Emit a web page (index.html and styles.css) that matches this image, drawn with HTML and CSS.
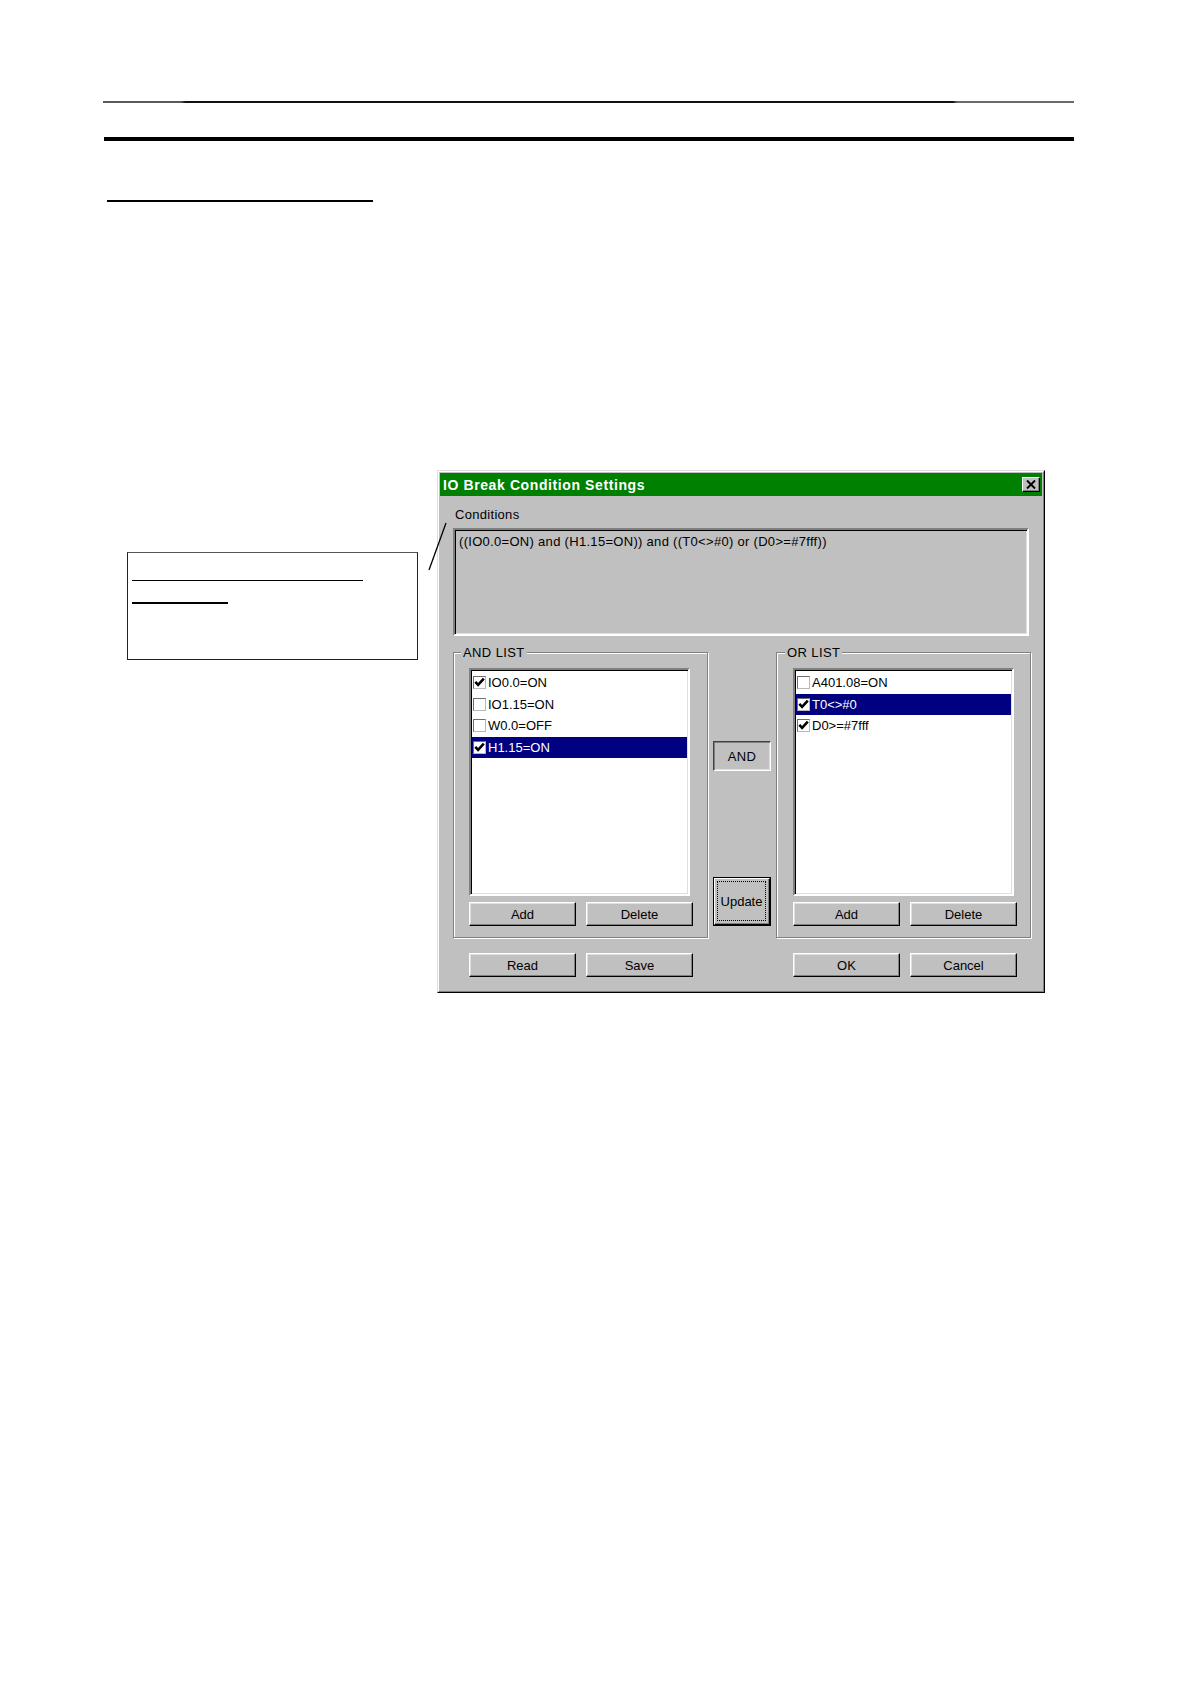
FILE: index.html
```html
<!DOCTYPE html>
<html lang="en">
<head>
<meta charset="utf-8">
<title>IO Break Condition Settings</title>
<link rel="stylesheet" href="styles.css">
</head>
<body>
<div class="page">
  <div class="rule-thin"></div>
  <div class="rule-thick"></div>
  <div class="heading-rule"></div>

  <div class="figure">
    <div class="callout">
      <div class="callout-line1"></div>
      <div class="callout-line2"></div>
    </div>
    <svg class="leader" width="22" height="54" viewBox="0 0 22 54"><line x1="2" y1="50" x2="19" y2="3" stroke="#000" stroke-width="1.3"/></svg>

    <div class="dialog">
      <div class="dialog-in">
        <div class="titlebar">
          <span class="title">IO Break Condition Settings</span>
          <span class="close"><svg width="10" height="9" viewBox="0 0 10 9"><path d="M1 0.5 L9 8.5 M9 0.5 L1 8.5" stroke="#000" stroke-width="2"/></svg></span>
        </div>
        <div class="dlg-body">
          <div class="cond-label">Conditions</div>
          <div class="cond-box">((IO0.0=ON) and (H1.15=ON)) and ((T0&lt;&gt;#0) or (D0&gt;=#7fff))</div>

          <div class="lists">
            <div class="group">
              <div class="group-title">AND LIST</div>
              <div class="listbox">
                <div class="row"><span class="cb"><svg class="tick" width="11" height="11" viewBox="0 0 11 11"><path d="M1.3 4.8 L4.1 7.9 L9.8 1.6" fill="none" stroke="#000" stroke-width="2.6"/></svg></span>IO0.0=ON</div>
                <div class="row"><span class="cb"></span>IO1.15=ON</div>
                <div class="row"><span class="cb"></span>W0.0=OFF</div>
                <div class="row sel"><span class="cb"><svg class="tick" width="11" height="11" viewBox="0 0 11 11"><path d="M1.3 4.8 L4.1 7.9 L9.8 1.6" fill="none" stroke="#000" stroke-width="2.6"/></svg></span>H1.15=ON</div>
              </div>
              <div class="btn-row">
                <button class="btn">Add</button>
                <button class="btn">Delete</button>
              </div>
            </div>

            <div class="mid">
              <button class="btn btn-and">AND</button>
              <button class="btn-default"><span class="face"><span class="focus">Update</span></span></button>
            </div>

            <div class="group group-or">
              <div class="group-title">OR LIST</div>
              <div class="listbox">
                <div class="row"><span class="cb"></span>A401.08=ON</div>
                <div class="row sel"><span class="cb"><svg class="tick" width="11" height="11" viewBox="0 0 11 11"><path d="M1.3 4.8 L4.1 7.9 L9.8 1.6" fill="none" stroke="#000" stroke-width="2.6"/></svg></span>T0&lt;&gt;#0</div>
                <div class="row"><span class="cb"><svg class="tick" width="11" height="11" viewBox="0 0 11 11"><path d="M1.3 4.8 L4.1 7.9 L9.8 1.6" fill="none" stroke="#000" stroke-width="2.6"/></svg></span>D0&gt;=#7fff</div>
              </div>
              <div class="btn-row">
                <button class="btn">Add</button>
                <button class="btn">Delete</button>
              </div>
            </div>
          </div>

          <div class="footer">
            <div class="pair">
              <button class="btn">Read</button>
              <button class="btn">Save</button>
            </div>
            <div class="pair pair-right">
              <button class="btn">OK</button>
              <button class="btn">Cancel</button>
            </div>
          </div>
        </div>
      </div>
    </div>
  </div>
</div>
</body>
</html>
```

FILE: styles.css
```css
* { box-sizing: border-box; }

html, body {
  margin: 0;
  background: #ffffff;
}

body {
  font-family: "Liberation Sans", Arial, sans-serif;
  color: #000;
}

.page {
  width: 1190px;
  min-height: 1684px;
  padding-top: 101px;
}

.rule-thin {
  height: 2px;
  width: 971px;
  margin-left: 103px;
  background: linear-gradient(to right, #5a5a5a 0, #5a5a5a 8%, #111 8.5%, #111 87.5%, #6a6a6a 88%, #6a6a6a 100%);
}

.rule-thick {
  height: 4px;
  width: 970px;
  margin: 34px 0 0 104px;
  background: #000;
}

.heading-rule {
  height: 2px;
  width: 266px;
  margin: 59px 0 0 107px;
  background: #000;
}

.figure {
  position: relative;
  display: flex;
  align-items: flex-start;
  margin: 268px 0 0 127px;
}

.callout {
  width: 291px;
  height: 108px;
  margin-top: 82px;
  border: 1px solid #222;
  border-top-color: #555;
  padding: 27px 0 0 4px;
}

.callout-line1 {
  width: 231px;
  height: 1px;
  background: #000;
}

.callout-line2 {
  width: 96px;
  height: 2px;
  margin-top: 21px;
  background: #000;
}

.leader {
  position: absolute;
  left: 300px;
  top: 50px;
}

/* ---------- dialog ---------- */
.dialog {
  margin-left: 19px;
  width: 608px;
  height: 523px;
  background: #c0c0c0;
  border: 1px solid;
  border-color: #dfdfdf #000 #000 #dfdfdf;
  font-size: 13px;
}

.dialog-in {
  height: 100%;
  border: 1px solid;
  border-color: #fff #808080 #808080 #fff;
  padding: 1px;
  display: flex;
  flex-direction: column;
}

.titlebar {
  height: 23px;
  flex: none;
  background: #008000;
  display: flex;
  align-items: center;
  padding-left: 3px;
  color: #fff;
}

.title {
  font-weight: bold;
  font-size: 14px;
  letter-spacing: 0.6px;
}

.close {
  margin-left: auto;
  margin-right: 2px;
  width: 18px;
  height: 15px;
  background: #c0c0c0;
  border: 1px solid;
  border-color: #fff #000 #000 #fff;
  box-shadow: inset -1px -1px 0 #808080;
  display: flex;
  align-items: center;
  justify-content: center;
}

.dlg-body {
  display: flex;
  flex-direction: column;
  padding: 11px 8px 0 13px;
}

.cond-label {
  line-height: 15px;
  height: 15px;
  padding-left: 2px;
  letter-spacing: 0.3px;
}

.cond-box {
  margin-top: 6px;
  width: 576px;
  height: 108px;
  border: 2px solid;
  border-color: #808080 #fff #fff #808080;
  box-shadow: inset 1px 1px 0 #000, inset -1px -1px 0 #dfdfdf;
  padding: 4px 0 0 4px;
  line-height: 15px;
  letter-spacing: 0.3px;
  white-space: nowrap;
}

.lists {
  margin-top: 16px;
  display: flex;
  height: 286px;
}

.group {
  width: 255px;
  height: 286px;
  border: 1px solid #808080;
  box-shadow: 1px 1px 0 #fff, inset 1px 1px 0 #fff;
  padding: 0 13px 0 15px;
}

.group-or {
  padding-left: 16px;
  padding-right: 12px;
}

.group-title {
  margin: -8px 0 0 -8px;
  width: fit-content;
  padding: 0 2px;
  line-height: 15px;
  height: 15px;
  background: #c0c0c0;
  letter-spacing: 0.4px;
  position: relative;
}

.listbox {
  margin-top: 8px;
  width: 221px;
  height: 228px;
  background: #fff;
  border: 2px solid;
  border-color: #808080 #fff #fff #808080;
  box-shadow: inset 1px 1px 0 #000, inset -1px -1px 0 #dfdfdf;
  padding: 2px 1px 0 1px;
}

.row {
  height: 21.6px;
  display: flex;
  align-items: center;
  padding-left: 1px;
  white-space: nowrap;
}

.row.sel {
  background: #000080;
  color: #fff;
}

.cb {
  width: 13px;
  height: 13px;
  margin-right: 2px;
  background: #fff;
  border: 1px solid;
  border-color: #6e6e6e #b8b8b8 #b8b8b8 #6e6e6e;
  display: flex;
  align-items: center;
  justify-content: center;
  flex: none;
}

.tick {
  display: block;
}

.btn-row {
  margin-top: 6px;
  display: flex;
  gap: 10px;
}

.btn {
  width: 107px;
  height: 24px;
  padding: 0;
  margin: 0;
  font: inherit;
  font-size: 13px;
  color: #000;
  background: #c0c0c0;
  border: 1px solid;
  border-color: #fff #000 #000 #fff;
  box-shadow: inset -1px -1px 0 #808080, inset 1px 1px 0 #dfdfdf;
  display: flex;
  align-items: center;
  justify-content: center;
}

.mid {
  width: 68px;
  flex: none;
  display: flex;
  flex-direction: column;
  align-items: center;
}

.btn-and {
  width: 58px;
  height: 30px;
  margin-top: 89px;
  border-color: #404040 #fff #fff #404040;
  box-shadow: inset 1px 1px 0 #808080, inset -1px -1px 0 #dfdfdf;
  letter-spacing: 0.4px;
}

.btn-default {
  width: 58px;
  height: 49px;
  margin-top: 106px;
  padding: 0;
  font: inherit;
  font-size: 13px;
  color: #000;
  background: #c0c0c0;
  border: 1px solid #000;
  display: block;
}

.btn-default .face {
  display: block;
  height: 100%;
  border: 1px solid;
  border-color: #fff #000 #000 #fff;
  box-shadow: inset -1px -1px 0 #808080;
  padding: 2px 3px 3px 2px;
}

.btn-default .focus {
  height: 100%;
  border: 1px dotted #000;
  display: flex;
  align-items: center;
  justify-content: center;
}

.footer {
  margin-top: 15px;
  display: flex;
  padding-left: 16px;
}

.pair {
  display: flex;
  gap: 10px;
}

.pair-right {
  margin-left: 100px;
}
```
